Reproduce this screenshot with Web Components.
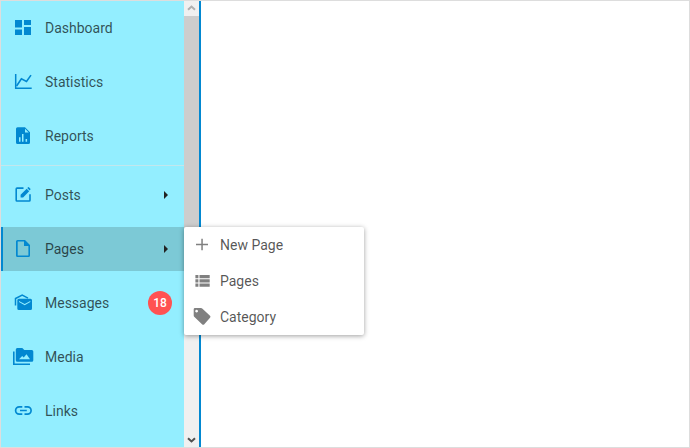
<!DOCTYPE html>
<html lang="en"><head><meta charset="utf-8"><title>Sidebar</title>
<style>html,body{margin:0;height:100%;background:#fff}</style></head><body>
<app-frame></app-frame>
<script>
const icons={
dashboard:'<path d="M4 4h7v7.600H4zM13 4h7v5h-7zM4 13.600h7V19H4zM13 11h7v8h-7z"/>',
statistics:'<path d="M4.7 4v14.2h16" fill="none" stroke="currentColor" stroke-width="1.5"/><path d="M5.6 16l4.8-7.3 5.1 2.7 4.5-6.3" fill="none" stroke="currentColor" stroke-width="1.6"/>',
reports:'<path fill-rule="evenodd" d="M6.5 3.3H14l5 5V18.500q0 1.500-1.500 1.500h-11Q5 20 5 18.500V4.800q0-1.500 1.500-1.500zM14 4.700v3.800h3.800zM8 13.300v4.500h1.500v-4.500zM11 10v7.800h1.500V10zM14.600 15v2.800h1.500V15z"/>',
posts:'<path d="M12.500 5.100H6Q5.200 5.100 5.200 5.900v11.300q0 .8.8.800h12.200q.8 0 .8-.800v-6" fill="none" stroke="currentColor" stroke-width="1.600"/><path d="M9.600 14.500v-2.700L15.700 5.700l2.500 2.500-6.100 6.300zM16.300 5.100l.8-.8q.4-.4.8 0l1.500 1.500q.4.4 0 .8l-.8.8z"/>',
pages:'<path fill-rule="evenodd" d="M6.500 3H14l5 5v10.500q0 1.500-1.500 1.500h-11Q5 20 5 18.500v-14Q5 3 6.500 3zm.2 1.600v13.800h10.700V9H13V4.600z"/>',
messages:'<path d="M4.500 14.500V7.500l6.700-3.300 5.800 3" fill="none" stroke="currentColor" stroke-width="1.500"/><path fill-rule="evenodd" d="M7.800 7.800H19.500q1.500 0 1.500 1.500v8.200q0 1.500-1.500 1.500H7.800q-1.500 0-1.500-1.500V9.300q0-1.500 1.500-1.500zM8 9.900v1.200l5.700 3.100 5.600-3.100V9.900L13.700 13z"/>',
media:'<path d="M2.800 6.500v12.700H19" fill="none" stroke="currentColor" stroke-width="1.600"/><path fill-rule="evenodd" d="M6.300 3h5l2 2h7.500q1.500 0 1.500 1.500v8.700q0 1.500-1.500 1.500H6.300q-1.500 0-1.500-1.500V4.500Q4.800 3 6.300 3zM8 14.300h11l-3.500-5-2.800 3.300-1.500-1.700z"/>',
links:'<path d="M11.300 7.900H8.200a3.600 3.600 0 0 0 0 7.200h3.100M13.500 7.900h3a3.600 3.600 0 0 1 0 7.200h-3M9 11.500h6.800" fill="none" stroke="currentColor" stroke-width="1.700"/>',
plus:'<path d="M6 10.800h12v1.500H6zM11.300 5.700h1.500v11.600h-1.500z"/>',
list:'<path d="M5.400 6h3v3.200h-3zM9.500 6h10.200v3.200H9.500zM5.400 10.300h3v3.200h-3zM9.500 10.300h10.200v3.200H9.500zM5.400 14.600h3v3.200h-3zM9.500 14.600h10.200v3.200H9.500z"/>',
tag:'<path fill-rule="evenodd" d="M5 3h6q.7 0 1.200.5l7.800 7.300q1 .9 0 1.900l-5.900 6.700q-.9.900-1.800 0L4.200 11.700q-.5-.5-.5-1.200V4.300Q3.700 3 5 3zM6.600 4.700a1.400 1.400 0 1 0 .01 0z"/>'};
const make=(name,html)=>customElements.define(name,class extends HTMLElement{connectedCallback(){if(!this.shadowRoot)this.attachShadow({mode:'open'}).innerHTML=typeof html==='function'?html(this):html}});
make('app-icon',e=>`<style>:host{display:block;width:24px;height:24px;flex:none}svg{display:block}</style><svg width="24" height="24" viewBox="0 0 24 24" fill="currentColor">${icons[e.getAttribute('name')]}</svg>`);
make('nav-item',e=>`<style>
:host{display:flex;align-items:center;height:44px;margin:5px 0;padding:0 12px 0 10px;box-sizing:border-box;color:rgba(0,0,0,.68)}
:host([selected]){background:#7cc9d6;box-shadow:inset 2px 0 #0288d1}
app-icon{color:#0288d1}.label{margin-left:10px;flex:1}
.arrow{width:0;border:4px solid transparent;border-left-color:#222;border-right:0;margin-right:4px}
</style><app-icon name="${e.getAttribute('icon')}"></app-icon><span class="label"><slot></slot></span><slot name="badge"></slot>${e.hasAttribute('arrow')?'<span class="arrow"></span>':''}`);
make('count-badge','<style>:host{display:flex;align-items:center;justify-content:center;width:24px;height:24px;border-radius:50%;background:#ff5252;color:#fff;font-size:12px;font-weight:500}</style><slot></slot>');
make('nav-divider','<style>:host{display:block;height:1px;margin:2px 0;background:#c3e7ed}</style>');
make('scroll-rail',`<style>:host{display:flex;flex-direction:column;width:15px;background:#f0f0f0}.thumb{height:238px;background:#cdcdcd}.space{flex:1}svg{display:block}</style>
<svg width="15" height="15"><path d="M4 8.800l3.500-3.300L11 8.800" fill="none" stroke="#b0b0b0" stroke-width="2"/></svg><div class="thumb"></div><div class="space"></div><svg width="15" height="15"><path d="M4 6.200l3.500 3.300L11 6.200" fill="none" stroke="#505050" stroke-width="2"/></svg>`);
make('menu-item',e=>`<style>:host{display:flex;align-items:center;height:36px;padding-left:6px;color:rgba(0,0,0,.68)}app-icon{color:#808080}span{margin-left:6px}</style><app-icon name="${e.getAttribute('icon')}"></app-icon><span><slot></slot></span>`);
make('popup-menu','<style>:host{display:block;width:180px;background:#fff;border-radius:2px;box-shadow:0 1px 5px rgba(0,0,0,.38)}</style><slot></slot>');
make('side-bar','<style>:host{display:flex;width:200px;box-sizing:border-box;border-right:2px solid #0288d1;background:#93eeff}nav{flex:1;display:flex;flex-direction:column}</style><nav><slot></slot></nav><scroll-rail></scroll-rail>');
make('app-frame',`<style>:host{display:flex;position:relative;width:690px;height:448px;box-sizing:border-box;border:1px solid #ddd;font:400 14px/20px Roboto,sans-serif;overflow:hidden}popup-menu{position:absolute;left:183px;top:226px}</style>
<side-bar><nav-item icon="dashboard">Dashboard</nav-item><nav-item icon="statistics">Statistics</nav-item><nav-item icon="reports">Reports</nav-item><nav-divider></nav-divider><nav-item icon="posts" arrow>Posts</nav-item><nav-item icon="pages" arrow selected>Pages</nav-item><nav-item icon="messages">Messages<count-badge slot="badge">18</count-badge></nav-item><nav-item icon="media">Media</nav-item><nav-item icon="links">Links</nav-item></side-bar>
<popup-menu><menu-item icon="plus">New Page</menu-item><menu-item icon="list">Pages</menu-item><menu-item icon="tag">Category</menu-item></popup-menu>`);
</script></body></html>
